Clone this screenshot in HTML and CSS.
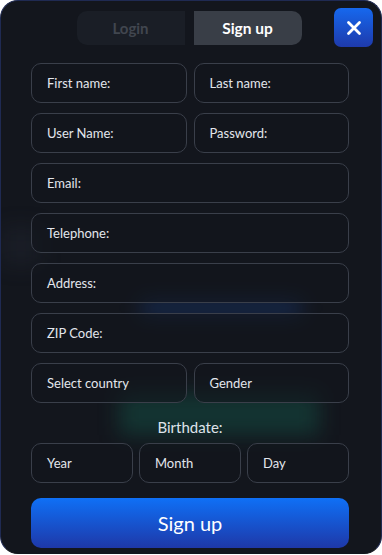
FILE: index.html
```html
<!DOCTYPE html>
<html>
<head>
<meta charset="utf-8">
<link rel="stylesheet" href="styles.css">
</head>
<body>
<div class="panel">
  <div class="glow glow-blue"></div>
  <div class="glow glow-green"></div>
  <div class="glow glow-left"></div>
  <div class="header">
    <div class="tabs">
      <div class="tab tab-off">Login</div>
      <div class="tab tab-on">Sign up</div>
    </div>
    <button class="close" aria-label="Close">
      <svg width="16" height="16" viewBox="0 0 16 16"><path d="M2.5 2.5 L13.5 13.5 M13.5 2.5 L2.5 13.5" stroke="#fff" stroke-width="2.8" stroke-linecap="round"/></svg>
    </button>
  </div>
  <form class="form">
    <div class="row two">
      <div class="field">First name:</div>
      <div class="field">Last name:</div>
    </div>
    <div class="row two">
      <div class="field">User Name:</div>
      <div class="field">Password:</div>
    </div>
    <div class="row"><div class="field">Email:</div></div>
    <div class="row"><div class="field">Telephone:</div></div>
    <div class="row"><div class="field">Address:</div></div>
    <div class="row"><div class="field">ZIP Code:</div></div>
    <div class="row two">
      <div class="field">Select country</div>
      <div class="field">Gender</div>
    </div>
    <div class="label">Birthdate:</div>
    <div class="row three">
      <div class="field">Year</div>
      <div class="field">Month</div>
      <div class="field">Day</div>
    </div>
    <div class="submit">Sign up</div>
  </form>
</div>
</body>
</html>
```

FILE: styles.css
```css
html, body {
  margin: 0;
  padding: 0;
  background: #ffffff;
}
body {
  font-family: "Lato", "Noto Sans", sans-serif;
}
.panel {
  position: relative;
  width: 382px;
  height: 554px;
  box-sizing: border-box;
  border-radius: 18px;
  background: #13161d;
  border: 1px solid #1f2a52;
  border-bottom-color: #13161d;
  overflow: hidden;
}
.glow {
  position: absolute;
  filter: blur(10px);
  z-index: 0;
}
.glow-blue {
  left: 140px;
  top: 300px;
  width: 160px;
  height: 14px;
  background: rgba(30, 90, 200, 0.35);
}
.glow-green {
  left: 118px;
  top: 392px;
  width: 200px;
  height: 42px;
  background: rgba(20, 110, 90, 0.35);
}
.glow-left {
  left: 0px;
  top: 225px;
  width: 40px;
  height: 40px;
  background: rgba(60, 70, 90, 0.15);
}
.header {
  position: relative;
  z-index: 1;
  display: flex;
  justify-content: center;
  padding-top: 10px;
}
.tabs {
  display: flex;
  gap: 9px;
  margin-right: 4px;
}
.tab {
  width: 108px;
  height: 34px;
  display: flex;
  align-items: center;
  justify-content: center;
  font-size: 15px;
  font-weight: 700;
  border-radius: 10px;
}
.tab-off {
  background: #1a1e26;
  color: #41464f;
  border-radius: 10px 0 0 10px;
}
.tab-on {
  background: #393e47;
  color: #ffffff;
  border-radius: 0 10px 10px 0;
  font-size: 15.5px;
}
.close {
  position: absolute;
  right: 8px;
  top: 7px;
  width: 39px;
  height: 39px;
  border: none;
  border-radius: 7px;
  background: linear-gradient(#1668ee, #1e3aab);
  display: flex;
  align-items: center;
  justify-content: center;
  padding: 0;
}
.form {
  position: relative;
  z-index: 1;
  margin: 18px 32px 0 30px;
  display: flex;
  flex-direction: column;
  gap: 10px;
}
.row {
  display: flex;
  gap: 7px;
}
.three {
  gap: 6px;
}
.field {
  flex: 1;
  height: 40px;
  box-sizing: border-box;
  border: 1px solid #3a3f4a;
  border-radius: 10px;
  background: rgba(19, 22, 29, 0.6);
  color: #e3e6ec;
  font-size: 13px;
  display: flex;
  align-items: center;
  padding-left: 15px;
}
.label {
  text-align: center;
  color: #dfe3ea;
  font-size: 15px;
  height: 20px;
  line-height: 20px;
  margin-top: 4px;
  margin-bottom: -4px;
}
.submit {
  margin-top: 5px;
  height: 50px;
  border-radius: 10px;
  background: linear-gradient(#0f70f6, #1e38a8);
  color: #ffffff;
  font-size: 20px;
  display: flex;
  align-items: center;
  justify-content: center;
}
```
